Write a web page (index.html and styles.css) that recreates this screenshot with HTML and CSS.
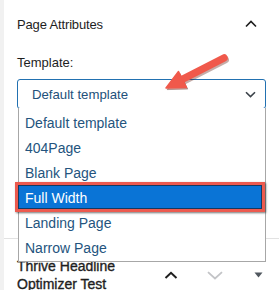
FILE: index.html
```html
<!DOCTYPE html>
<html>
<head>
<meta charset="utf-8">
<link rel="stylesheet" href="styles.css">
</head>
<body>
<div class="sidebar">
  <section class="panel attrs">
    <div class="panel-head">
      <span class="panel-title">Page Attributes</span>
      <span class="head-toggle">
        <svg width="12" height="8" viewBox="0 0 12 8"><path d="M1 6.5 L6 1.5 L11 6.5" fill="none" stroke="#1e1e1e" stroke-width="1.6"/></svg>
      </span>
    </div>
    <div class="panel-body">
      <div class="label">Template:</div>
      <div class="select-wrap">
        <div class="select">
          <span>Default template</span>
          <svg width="11" height="7" viewBox="0 0 11 7"><path d="M1 1.2 L5.5 5.6 L10 1.2" fill="none" stroke="#3c434a" stroke-width="1.6"/></svg>
        </div>
        <ul class="dropdown">
          <li>Default template</li>
          <li>404Page</li>
          <li>Blank Page</li>
          <li class="selected">Full Width</li>
          <li>Landing Page</li>
          <li>Narrow Page</li>
        </ul>
      </div>
    </div>
  </section>
  <section class="panel thrive">
    <div class="thrive-head">
      <span class="thrive-title">Thrive Headline Optimizer Test</span>
      <span class="ctrl">
        <svg width="14" height="8" viewBox="0 0 14 8"><path d="M1.5 7 L7 1.8 L12.5 7" fill="none" stroke="#1e1e1e" stroke-width="2"/></svg>
      </span>
      <span class="ctrl">
        <svg width="16" height="9" viewBox="0 0 16 9"><path d="M1 1.2 L8 7.5 L15 1.2" fill="none" stroke="#c3c4c7" stroke-width="1.8"/></svg>
      </span>
      <span class="ctrl last">
        <svg width="9" height="6" viewBox="0 0 9 6"><path d="M0.5 0.5 L8.5 0.5 L4.5 5.5 Z" fill="#50575e"/></svg>
      </span>
    </div>
  </section>
  <svg class="arrow" width="279" height="290" viewBox="0 0 279 290">
    <g transform="translate(1.2 1.6)" fill="rgba(90,20,10,0.35)" stroke="rgba(90,20,10,0.35)">
      <line x1="224" y1="58" x2="181" y2="80" stroke-width="7.5" stroke-linecap="round"/>
      <polygon points="166,88 178.5,71.5 186.5,87.5"/>
    </g>
    <g fill="#f0594b" stroke="#f0594b">
      <line x1="224" y1="58" x2="181" y2="80" stroke-width="7.5" stroke-linecap="round"/>
      <polygon points="166,88 178.5,71.5 186.5,87.5" stroke-width="1.5" stroke-linejoin="round"/>
    </g>
  </svg>
</div>
</body>
</html>
```

FILE: styles.css
```css
* { box-sizing: border-box; }
html, body { margin: 0; padding: 0; background: #fff; }
body {
  font-family: "Liberation Sans", Arial, sans-serif;
  color: #1e1e1e;
  width: 279px;
  height: 290px;
  overflow: hidden;
}
.sidebar {
  position: relative;
  border-left: 4px solid #f1f1f1;
  height: 290px;
}
.panel-head {
  height: 48px;
  display: flex;
  align-items: center;
  justify-content: space-between;
  padding: 0 16px 0 13px;
}
.panel-title {
  font-size: 13px;
  letter-spacing: -0.15px;
  padding-top: 1px;
}
.head-toggle {
  width: 24px;
  display: flex;
  justify-content: center;
  padding-bottom: 1px;
}
.panel-body {
  padding: 7px 13px 129px 13px;
}
.label {
  font-size: 13px;
  line-height: 16px;
  margin-bottom: 8px;
}
.select-wrap {
  position: relative;
  width: 249px;
}
.select {
  height: 30px;
  border: 1px solid #2271b1;
  border-radius: 3px;
  display: flex;
  align-items: center;
  justify-content: space-between;
  padding: 0 9px 0 14px;
  font-size: 13.2px;
  color: #22507a;
}
.select svg { margin-top: 1px; }
.dropdown {
  position: absolute;
  top: 29px;
  left: 1px;
  right: 0;
  margin: 0;
  padding: 3px 0 0 0;
  list-style: none;
  background: #fff;
  border: 1px solid #a7a7a7;
  border-top: none;
  z-index: 2;
}
.dropdown li {
  height: 25px;
  line-height: 25px;
  padding-left: 6px;
  font-size: 14px;
  color: #24547e;
}
.dropdown li.selected {
  position: relative;
  background: #0a74d6;
  color: #fff;
  margin-right: 2px;
}
.dropdown li.selected::after {
  content: "";
  position: absolute;
  top: -4px;
  bottom: -1px;
  left: -4px;
  right: -2px;
  border: 3px solid #ec5a4f;
  box-shadow: inset 0 0 0 1px #123a63, 1px 1px 2px rgba(0, 0, 0, 0.55);
}
.panel.thrive {
  border-top: 1px solid #e2e2e2;
}
.thrive-head {
  display: flex;
  align-items: center;
  padding: 18px 0 0 13px;
}
.thrive-title {
  width: 132px;
  font-size: 14px;
  font-weight: 400;
  -webkit-text-stroke: 0.35px #1e1e1e;
  line-height: 18px;
  color: #1e1e1e;
}
.ctrl {
  width: 44px;
  display: flex;
  justify-content: center;
}
.ctrl.last { width: 42px; }
.arrow {
  position: absolute;
  top: 0;
  left: -4px;
  pointer-events: none;
  z-index: 3;
}
```
